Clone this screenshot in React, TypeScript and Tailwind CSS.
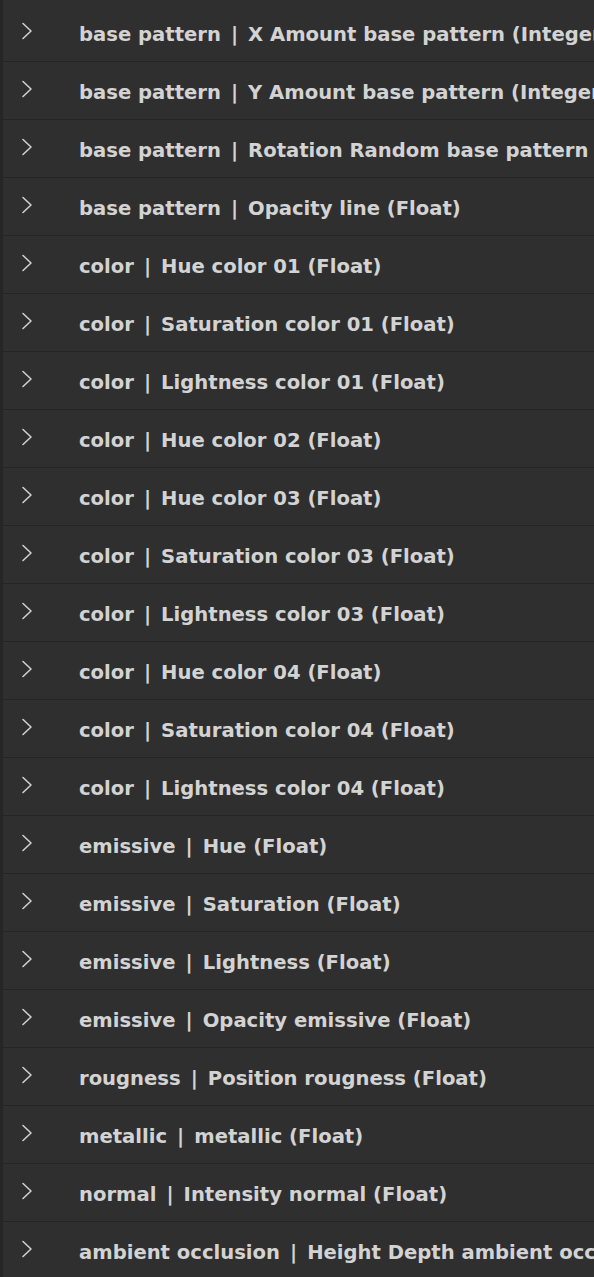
const rows: [string, string][] = [
  ["base pattern", "X Amount base pattern (Integer)"],
  ["base pattern", "Y Amount base pattern (Integer)"],
  ["base pattern", "Rotation Random base pattern (Float)"],
  ["base pattern", "Opacity line (Float)"],
  ["color", "Hue color 01 (Float)"],
  ["color", "Saturation color 01 (Float)"],
  ["color", "Lightness color 01 (Float)"],
  ["color", "Hue color 02 (Float)"],
  ["color", "Hue color 03 (Float)"],
  ["color", "Saturation color 03 (Float)"],
  ["color", "Lightness color 03 (Float)"],
  ["color", "Hue color 04 (Float)"],
  ["color", "Saturation color 04 (Float)"],
  ["color", "Lightness color 04 (Float)"],
  ["emissive", "Hue (Float)"],
  ["emissive", "Saturation (Float)"],
  ["emissive", "Lightness (Float)"],
  ["emissive", "Opacity emissive (Float)"],
  ["rougness", "Position rougness (Float)"],
  ["metallic", "metallic (Float)"],
  ["normal", "Intensity normal (Float)"],
  ["ambient occlusion", "Height Depth ambient occlusion (Float)"],
];

function Chevron() {
  return (
    <svg width="12" height="18" viewBox="0 0 12 18" fill="none" className="shrink-0 -mt-[3px]">
      <path d="M2 1.5 L10 9 L2 16.5" stroke="#cfcfcf" strokeWidth="1.6" strokeLinecap="round" strokeLinejoin="round" />
    </svg>
  );
}

export default function App() {
  return (
    <div className="w-[594px] h-[1277px] overflow-hidden bg-[#2f2f2f] border-l-[3px] border-[#262626] pt-[4px] font-['DejaVu_Sans',sans-serif]">
      {rows.map(([group, name]) => (
        <div key={group + name} className="h-[58px] flex items-center border-b border-[#252525] pl-[18px] overflow-hidden">
          <Chevron />
          <span className="ml-[46px] mt-[5px] whitespace-nowrap text-[19.6px] font-bold text-[#d3d3d3]">
            {group}
            <span className="mx-[10px]">|</span>
            {name}
          </span>
        </div>
      ))}
    </div>
  );
}
